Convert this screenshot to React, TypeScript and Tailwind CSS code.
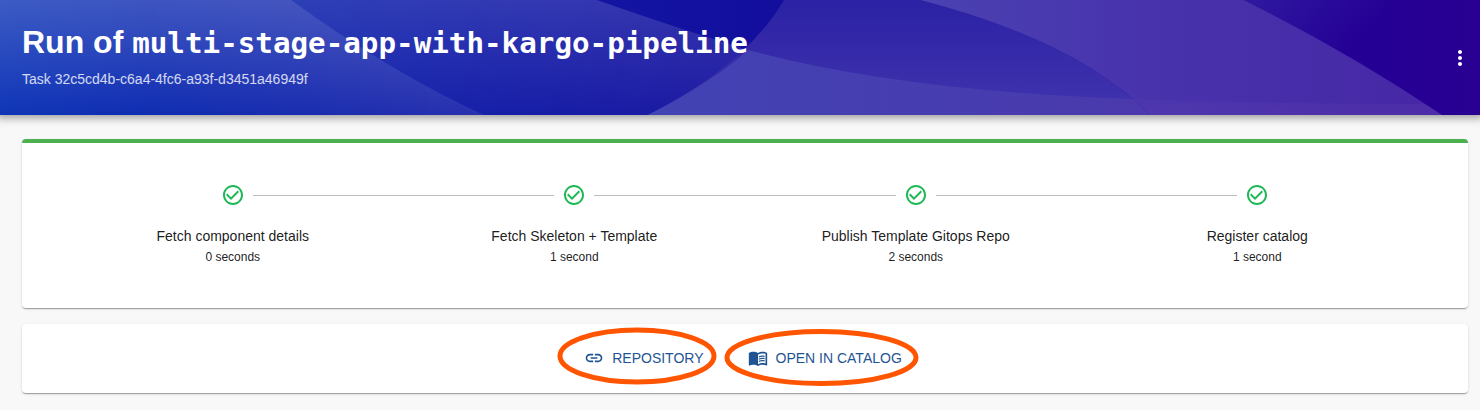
import React from "react";

const steps = [
  { title: "Fetch component details", time: "0 seconds" },
  { title: "Fetch Skeleton + Template", time: "1 second" },
  { title: "Publish Template Gitops Repo", time: "2 seconds" },
  { title: "Register catalog", time: "1 second" },
];

function Waves() {
  return (
    <svg className="absolute inset-0 h-full w-full" viewBox="0 0 1480 115" preserveAspectRatio="none">
      <defs>
        <linearGradient id="base" x1="0" x2="1" y1="0" y2="0">
          <stop offset="0" stopColor="#0f35b7" />
          <stop offset="0.33" stopColor="#121ba7" />
          <stop offset="0.53" stopColor="#130d9c" />
          <stop offset="0.86" stopColor="#220096" />
          <stop offset="1" stopColor="#280092" />
        </linearGradient>
        <linearGradient id="fadeA" x1="0" x2="0" y1="0" y2="1">
          <stop offset="0" stopColor="#fff" stopOpacity="0.08" />
          <stop offset="1" stopColor="#fff" stopOpacity="0" />
        </linearGradient>
        <linearGradient id="fadeA2" x1="0" x2="484" y1="0" y2="0" gradientUnits="userSpaceOnUse">
          <stop offset="0.3" stopColor="#fff" stopOpacity="0" />
          <stop offset="1" stopColor="#fff" stopOpacity="0.08" />
        </linearGradient>
        <linearGradient id="fadeB" x1="0" x2="0" y1="0" y2="1">
          <stop offset="0" stopColor="#fff" stopOpacity="0.12" />
          <stop offset="1" stopColor="#fff" stopOpacity="0" />
        </linearGradient>
        <linearGradient id="fadeB2" x1="300" x2="748" y1="0" y2="0" gradientUnits="userSpaceOnUse">
          <stop offset="0" stopColor="#fff" stopOpacity="0" />
          <stop offset="1" stopColor="#fff" stopOpacity="0.04" />
        </linearGradient>
        <linearGradient id="mid" x1="0" x2="0" y1="0" y2="1">
          <stop offset="0" stopColor="#2a21a4" />
          <stop offset="1" stopColor="#4234ae" />
        </linearGradient>
        <linearGradient id="low" x1="648" x2="1150" y1="0" y2="0" gradientUnits="userSpaceOnUse">
          <stop offset="0" stopColor="#4243b4" />
          <stop offset="1" stopColor="#4a39ad" />
        </linearGradient>
        <linearGradient id="right" x1="920" x2="1442" y1="0" y2="0" gradientUnits="userSpaceOnUse">
          <stop offset="0" stopColor="#4a42b2" />
          <stop offset="0.4" stopColor="#4834ad" />
          <stop offset="1" stopColor="#4627a5" />
        </linearGradient>
        <linearGradient id="foot" x1="0" x2="0" y1="95" y2="115" gradientUnits="userSpaceOnUse">
          <stop offset="0" stopColor="#7650b5" stopOpacity="0.08" />
          <stop offset="1" stopColor="#7650b5" stopOpacity="0.15" />
        </linearGradient>
        <linearGradient id="corner" x1="1244" y1="0" x2="1330" y2="75" gradientUnits="userSpaceOnUse">
          <stop offset="0" stopColor="#3019a0" />
          <stop offset="1" stopColor="#3019a0" stopOpacity="0" />
        </linearGradient>
      </defs>
      <path fill="url(#base)" d="M0 0H1480V115H0Z" />
      <path fill="url(#fadeB)" d="M0 0H597Q665 24 748 50L760 54V115H0Z" />
      <path fill="url(#fadeB2)" d="M0 0H597Q665 24 748 50L760 54V115H0Z" />
      <path fill="url(#fadeA)" d="M0 0H291Q390 72 484 115H0Z" />
      <path fill="url(#fadeA2)" d="M0 0H291Q390 72 484 115H0Z" />
      <path fill="url(#mid)" d="M784 0H920Q1078 41 1150 115H648Q745 66 784 0Z" />
      <path fill="url(#low)" d="M748 50Q900 91 1133 99L1150 115H648Q713 82 748 50Z" />
      <path fill="url(#right)" d="M920 0H1244Q1350 53 1442 115H1150Q1078 41 920 0Z" />
      <path fill="url(#foot)" d="M1133 99Q1270 104 1425 104L1442 115H1150Z" />
      <path fill="url(#corner)" d="M1244 0H1480V115H1442Q1350 53 1244 0Z" />
    </svg>
  );
}

function CheckIcon() {
  return (
    <svg className="size-6 shrink-0 fill-[#1db954]" viewBox="0 0 24 24">
      <path d="M16.59 7.58L10 14.17l-3.59-3.58L5 12l5 5 8-8zM12 2C6.48 2 2 6.48 2 12s4.48 10 10 10 10-4.48 10-10S17.520 2 12 2zm0 18c-4.420 0-8-3.580-8-8s3.580-8 8-8 8 3.580 8 8-3.580 8-8 8z" />
    </svg>
  );
}

const paper =
  "rounded bg-white shadow-[0_2px_1px_-1px_rgba(0,0,0,0.2),0_1px_1px_0_rgba(0,0,0,0.14),0_1px_3px_0_rgba(0,0,0,0.12)]";

export default function App() {
  return (
    <div className="h-[410px] w-full overflow-hidden bg-[#f8f8f8] font-['Liberation_Sans',sans-serif] text-black/90">
      <header className="relative h-[115px] shadow-[0_0_8px_3px_rgba(80,80,80,0.55)]">
        <Waves />
        <div className="relative flex h-full items-center justify-between pr-2 pl-[22px] text-white">
          <div className="pb-[5px]">
            <h1 className="mb-[7px] h-10 text-[32px] leading-10 font-bold whitespace-pre">
              Run of <span className="font-['DejaVu_Sans_Mono',monospace] text-[29.23px]">multi-stage-app-with-kargo-pipeline</span>
            </h1>
            <p className="text-sm leading-5 text-white/80">Task 32c5cd4b-c6a4-4fc6-a93f-d3451a46949f</p>
          </div>
          <button aria-label="more" className="size-6">
            <svg className="size-6 fill-white" viewBox="0 0 24 24">
              <path d="M12 8c1.1 0 2-.9 2-2s-.9-2-2-2-2 .9-2 2 .9 2 2 2zm0 2c-1.1 0-2 .9-2 2s.9 2 2 2 2-.9 2-2-.9-2-2-2zm0 6c-1.1 0-2 .9-2 2s.9 2 2 2 2-.9 2-2-.9-2-2-2z" />
            </svg>
          </button>
        </div>
      </header>
      <main className="flex flex-col gap-4 pt-6 pr-3 pl-[22px]">
        <section className={`${paper} h-[169px] overflow-hidden`}>
          <div className="h-1 bg-[#4caf50]" />
          <ol className="grid grid-cols-4 px-10 pt-10">
            {steps.map((step, i) => (
              <li key={step.title} className="flex flex-col items-center">
                <div className="flex w-full items-center gap-2">
                  <span className={i > 0 ? "h-px flex-1 bg-[#bdbdbd]" : "h-px flex-1"} />
                  <CheckIcon />
                  <span className={i < 3 ? "h-px flex-1 bg-[#bdbdbd]" : "h-px flex-1"} />
                </div>
                <p className="mt-[19px] text-sm leading-5">{step.title}</p>
                <p className="mt-px text-xs leading-5">{step.time}</p>
              </li>
            ))}
          </ol>
        </section>
        <section className={`${paper} relative flex h-[69px] items-center justify-center pr-1 pb-px text-sm text-[#1f5493]`}>
          <a className="mr-11 flex items-center gap-2">
            <svg className="size-5 fill-current" viewBox="0 0 24 24">
              <path d="M3.9 12c0-1.71 1.39-3.1 3.1-3.1h4V7H7c-2.76 0-5 2.24-5 5s2.24 5 5 5h4v-1.900H7c-1.710 0-3.100-1.390-3.100-3.100zM8 13h8v-2H8v2zm9-6h-4v1.900h4c1.710 0 3.100 1.390 3.100 3.100s-1.390 3.100-3.100 3.100h-4V17h4c2.760 0 5-2.240 5-5s-2.240-5-5-5z" />
            </svg>
            REPOSITORY
          </a>
          <a className="flex items-center gap-2">
            <svg className="size-5 fill-current" viewBox="0 0 24 24">
              <path d="M21 5c-1.110-.350-2.330-.500-3.500-.500-1.950 0-4.050.400-5.500 1.500-1.450-1.100-3.550-1.500-5.500-1.500S2.450 4.900 1 6v14.650c0 .250.250.500.500.500.100 0 .150-.050.250-.050C3.100 20.450 5.050 20 6.500 20c1.950 0 4.050.400 5.500 1.500 1.350-.850 3.800-1.500 5.500-1.500 1.650 0 3.350.300 4.750 1.050.100.050.150.050.250.050.250 0 .500-.250.500-.500V6c-.600-.450-1.250-.750-2-1zm0 13.500c-1.100-.350-2.300-.500-3.500-.500-1.700 0-4.150.650-5.500 1.500V8c1.350-.850 3.800-1.500 5.500-1.500 1.200 0 2.400.150 3.500.500v11.500z" />
              <path d="M17.500 10.500c.880 0 1.730.090 2.500.260V9.240c-.790-.150-1.640-.240-2.500-.240-1.700 0-3.240.290-4.500.830v1.660c1.130-.640 2.700-.990 4.500-.990zM13 12.490v1.660c1.130-.640 2.700-.990 4.500-.990.880 0 1.730.090 2.500.260V11.900c-.790-.150-1.640-.240-2.500-.240-1.700 0-3.240.300-4.500.830zm4.500 1.840c-1.700 0-3.240.290-4.500.830v1.660c1.130-.640 2.700-.990 4.500-.990.880 0 1.730.090 2.500.260v-1.520c-.790-.160-1.640-.240-2.500-.240z" />
            </svg>
            OPEN IN CATALOG
          </a>
          <svg className="absolute top-0 left-[528px]" width="376" height="69" viewBox="550 324 376 69" fill="none" stroke="#ff5500" strokeWidth="5">
            <ellipse cx="637" cy="356" rx="77" ry="26" />
            <ellipse cx="821.500" cy="357.500" rx="94.500" ry="26" />
          </svg>
        </section>
      </main>
    </div>
  );
}
